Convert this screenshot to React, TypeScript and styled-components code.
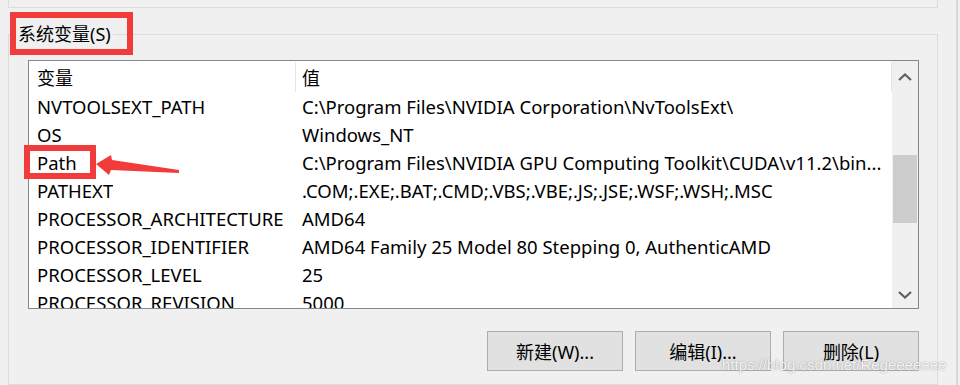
import React from "react";
import styled, { createGlobalStyle } from "styled-components";

const GlobalStyle = createGlobalStyle`
  html, body {
    margin: 0;
    padding: 0;
    background: #f0f0f0;
  }
  body {
    font-family: "Noto Sans", "Noto Sans CJK SC", sans-serif;
    color: #000;
  }
`;

const Window = styled.div`
  position: relative;
  width: 960px;
  height: 385px;
  overflow: hidden;
  background: #f0f0f0;
  box-sizing: border-box;
  padding-left: 8px;
  display: flex;
  flex-direction: column;
`;

const EdgeLine = styled.div`
  position: absolute;
  top: 0;
  bottom: 0;
  left: 956px;
  width: 2px;
  background: #d9d9d9;
`;

const TopGroup = styled.div`
  width: 930px;
  height: 8px;
  box-sizing: border-box;
  border: 1px solid #dcdcdc;
  border-top: none;
`;

const Group = styled.fieldset`
  margin: 15px 0 0 0;
  padding: 0;
  width: 930px;
  box-sizing: border-box;
  border: 1px solid #dcdcdc;
  min-width: 0;
  flex: 1;
`;

const Legend = styled.legend`
  margin-left: 7px;
  padding: 0 2px;
  font-size: 18px;
  line-height: 22px;
  font-family: "Noto Sans", "Noto Sans CJK SC", sans-serif;
`;

const ListBox = styled.div`
  margin: 15px 0 0 19px;
  width: 891px;
  height: 249px;
  box-sizing: border-box;
  border: 1px solid #828790;
  background: #fff;
  display: flex;
`;

const Table = styled.div`
  width: 863px;
  overflow: hidden;
  font-size: 18.5px;
`;

const Row = styled.div<{ $header?: boolean }>`
  display: grid;
  grid-template-columns: 267px 596px;
  height: ${(p) => (p.$header ? 31 : 28)}px;
  align-items: center;
`;

const Cell = styled.div<{ $header?: boolean; $value?: boolean }>`
  box-sizing: border-box;
  height: ${(p) => (p.$header ? "30px" : "100%")};
  margin-top: ${(p) => (p.$header ? "1px" : "0")};
  display: flex;
  align-items: center;
  padding-left: ${(p) => (p.$value ? 6 : 8)}px;
  padding-right: 8px;
  white-space: nowrap;
  overflow: hidden;
  font-size: ${(p) => (p.$header ? "18px" : "inherit")};
  border-right: ${(p) => (p.$header ? "1px solid #e5e5e5" : "none")};
`;

const CellText = styled.span`
  overflow: hidden;
  text-overflow: ellipsis;
`;

const Scrollbar = styled.div`
  width: 26px;
  background: #f0f0f0;
  display: flex;
  flex-direction: column;
`;

const ArrowBtn = styled.div<{ $h: number }>`
  height: ${(p) => p.$h}px;
  display: flex;
  align-items: center;
  justify-content: center;
`;

const Track = styled.div`
  flex: 1;
`;

const Thumb = styled.div`
  margin-top: 62px;
  margin-left: 1px;
  width: 24px;
  height: 68px;
  background: #cdcdcd;
`;

const ButtonRow = styled.div`
  margin: 22px 0 0 19px;
  width: 891px;
  display: flex;
  justify-content: flex-end;
  gap: 12px;
`;

const Button = styled.button`
  width: 136px;
  height: 40px;
  box-sizing: border-box;
  border: 1px solid #adadad;
  background: #e1e1e1;
  font-family: "Noto Sans", "Noto Sans CJK SC", sans-serif;
  font-size: 18px;
  color: #000;
  padding: 0;
`;

const RedBox = styled.div<{ $x: number; $y: number; $w: number; $h: number }>`
  position: absolute;
  left: ${(p) => p.$x}px;
  top: ${(p) => p.$y}px;
  width: ${(p) => p.$w}px;
  height: ${(p) => p.$h}px;
  box-sizing: border-box;
  border: 6px solid #f23c3c;
`;

const ArrowSvg = styled.svg`
  position: absolute;
  left: 0;
  top: 0;
`;

const Watermark = styled.div`
  position: absolute;
  left: 722px;
  top: 356px;
  font-family: "Liberation Sans", Arial, sans-serif;
  font-size: 15px;
  color: rgba(255, 255, 255, 0.9);
  text-shadow: 0 0 1px rgba(120, 120, 120, 0.6), 0 0 2px rgba(160, 160, 160, 0.5);
  white-space: nowrap;
`;

const rows: [string, string][] = [
  ["NVTOOLSEXT_PATH", "C:\\Program Files\\NVIDIA Corporation\\NvToolsExt\\"],
  ["OS", "Windows_NT"],
  ["Path", "C:\\Program Files\\NVIDIA GPU Computing Toolkit\\CUDA\\v11.2\\bin..."],
  ["PATHEXT", ".COM;.EXE;.BAT;.CMD;.VBS;.VBE;.JS;.JSE;.WSF;.WSH;.MSC"],
  ["PROCESSOR_ARCHITECTURE", "AMD64"],
  ["PROCESSOR_IDENTIFIER", "AMD64 Family 25 Model 80 Stepping 0, AuthenticAMD"],
  ["PROCESSOR_LEVEL", "25"],
  ["PROCESSOR_REVISION", "5000"],
];

const Chevron = ({ up }: { up?: boolean }) => (
  <svg width="14" height="8" viewBox="0 0 14 8">
    <polyline
      points={up ? "1,7 7,1.5 13,7" : "1,1 7,6.5 13,1"}
      fill="none"
      stroke="#606060"
      strokeWidth="2.2"
    />
  </svg>
);

export default function App() {
  return (
    <>
      <GlobalStyle />
      <Window>
        <TopGroup />
        <Group>
          <Legend>系统变量(S)</Legend>
          <ListBox>
            <Table>
              <Row $header>
                <Cell $header>变量</Cell>
                <Cell $header $value>值</Cell>
              </Row>
              {rows.map(([name, value]) => (
                <Row key={name}>
                  <Cell>
                    <CellText>{name}</CellText>
                  </Cell>
                  <Cell $value>
                    <CellText>{value}</CellText>
                  </Cell>
                </Row>
              ))}
            </Table>
            <Scrollbar>
              <ArrowBtn $h={32}>
                <Chevron up />
              </ArrowBtn>
              <Track>
                <Thumb />
              </Track>
              <ArrowBtn $h={26}>
                <Chevron />
              </ArrowBtn>
            </Scrollbar>
          </ListBox>
          <ButtonRow>
            <Button>新建(W)...</Button>
            <Button>编辑(I)...</Button>
            <Button>删除(L)</Button>
          </ButtonRow>
        </Group>
        <EdgeLine />
        <RedBox $x={10} $y={12} $w={123} $h={43} />
        <RedBox $x={24} $y={145} $w={72} $h={34} />
        <ArrowSvg width="200" height="200" viewBox="0 0 200 200">
          <polygon
            points="96,164 111,155 112,160 179,170 179,173 111,170 109,175"
            fill="#f23c3c"
          />
        </ArrowSvg>
        <Watermark>https://blog.csdn.net/Regeeeeeee</Watermark>
      </Window>
    </>
  );
}
